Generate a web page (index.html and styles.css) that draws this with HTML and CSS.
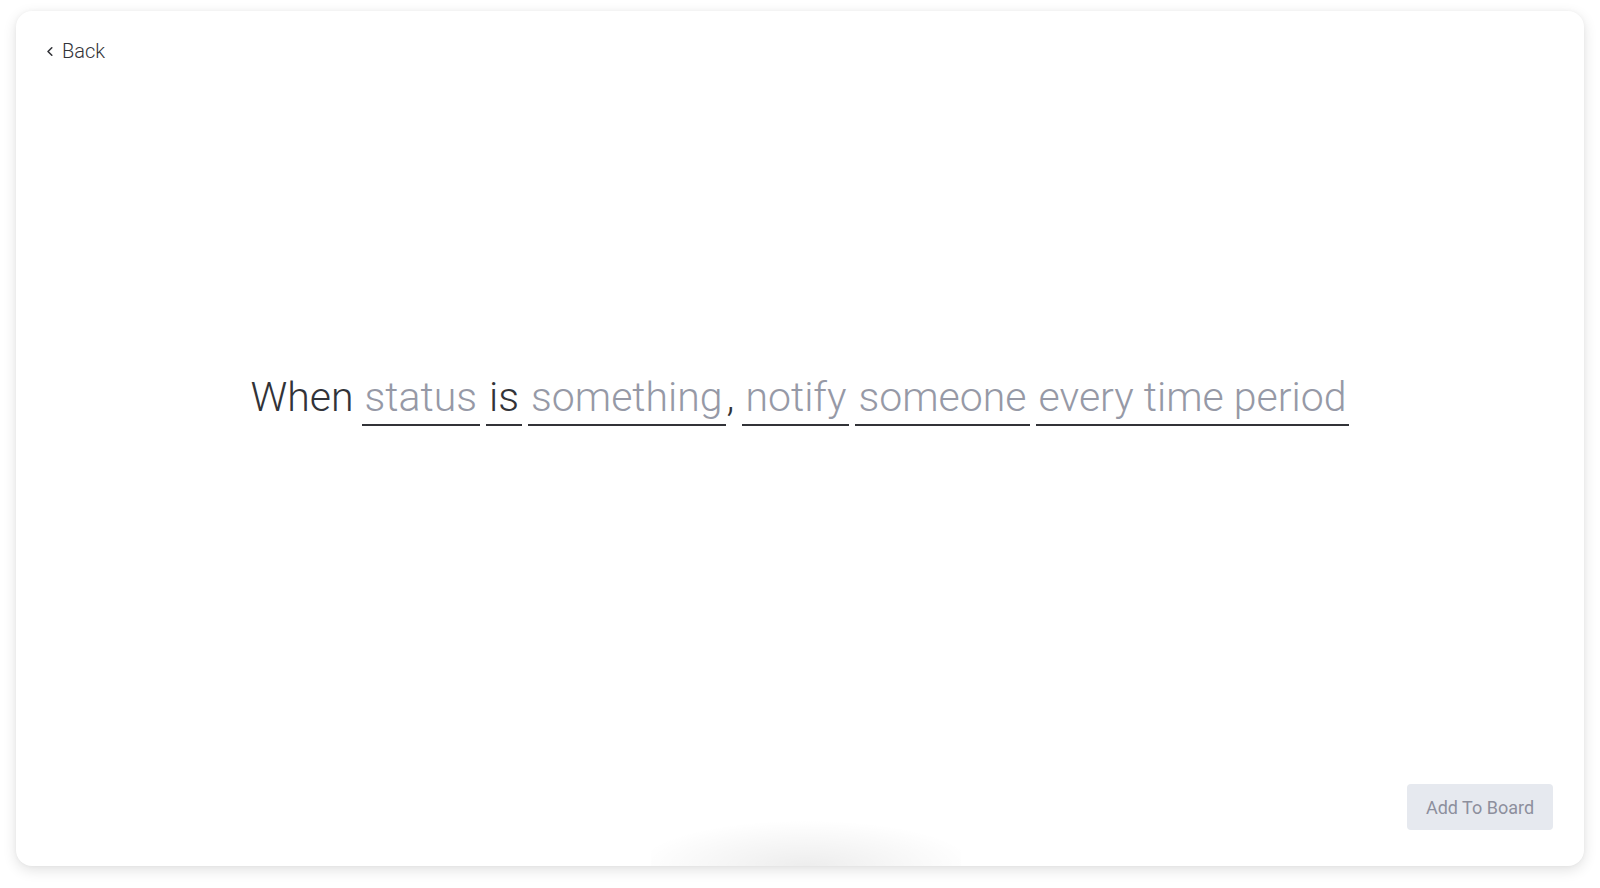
FILE: index.html
```html
<!DOCTYPE html>
<html lang="en">
<head>
<meta charset="utf-8">
<title>Recipe</title>
<link rel="stylesheet" href="styles.css">
</head>
<body>
<div class="card">
  <header class="top">
    <a class="back" href="#">
      <svg class="chev" width="8" height="11" viewBox="0 0 8 11" aria-hidden="true"><path d="M5.8 1.8 L2 5.5 L5.8 9.2" fill="none" stroke="#323338" stroke-width="1.6" stroke-linecap="round" stroke-linejoin="round"/></svg>
      <span>Back</span>
    </a>
  </header>
  <main class="middle">
    <div class="sentence">
      <span class="word lead">When</span>
      <span class="field">status</span>
      <span class="field dark">is</span>
      <span class="field">something</span>
      <span class="word comma">,</span>
      <span class="field">notify</span>
      <span class="field">someone</span>
      <span class="field">every time period</span>
    </div>
  </main>
  <footer class="bottom">
    <button class="add" type="button">Add To Board</button>
  </footer>
  <div class="glow"></div>
</div>
</body>
</html>
```
FILE: styles.css
```css
html, body {
  margin: 0;
  padding: 0;
  background: #ffffff;
}
body {
  font-family: Roboto, "Liberation Sans", Arial, sans-serif;
  color: #323338;
  height: 888px;
  overflow: hidden;
  padding: 11px 16px 0 16px;
  box-sizing: border-box;
}
.card {
  position: relative;
  width: 1568px;
  height: 855px;
  background: #ffffff;
  border-radius: 16px;
  box-shadow: 0 4px 14px rgba(0, 0, 0, 0.12), 0 0 4px rgba(0, 0, 0, 0.04);
  display: flex;
  flex-direction: column;
  box-sizing: border-box;
  overflow: hidden;
}
.top {
  padding: 28px 30px 0 30px;
  height: 52px;
  box-sizing: border-box;
}
.back {
  display: inline-flex;
  align-items: center;
  gap: 8px;
  text-decoration: none;
  color: #323338;
  font-size: 20px;
  line-height: 24px;
  font-weight: 300;
}
.chev {
  display: block;
  margin-top: 1px;
}
.middle {
  flex: 1;
  display: flex;
  align-items: center;
  justify-content: center;
  padding-bottom: 48px;
}
.sentence {
  display: flex;
  align-items: baseline;
  font-size: 41px;
  line-height: 48px;
  font-weight: 300;
  gap: 6px;
}
.word {
  color: #323338;
}
.lead {
  margin-right: 2px;
}
.comma {
  margin-left: -5px;
  margin-right: 2px;
}
.field {
  color: #9699a6;
  padding: 0 3px 3px 3px;
  border-bottom: 2px solid #323338;
}
.field.dark {
  color: #323338;
}
.bottom {
  display: flex;
  justify-content: flex-end;
  padding: 0 31px 36px 0;
}
.add {
  width: 146px;
  height: 46px;
  border: none;
  border-radius: 4px;
  background: #e6e9ef;
  color: #8d8f9d;
  font-family: Roboto, "Liberation Sans", Arial, sans-serif;
  font-size: 18px;
  font-weight: 400;
  padding: 0;
}
.glow {
  position: absolute;
  left: 635px;
  bottom: 0;
  width: 310px;
  height: 46px;
  background: radial-gradient(ellipse 55% 100% at 50% 100%, rgba(0, 0, 0, 0.07), rgba(0, 0, 0, 0.03) 55%, rgba(0, 0, 0, 0) 100%);
  pointer-events: none;
}
```
